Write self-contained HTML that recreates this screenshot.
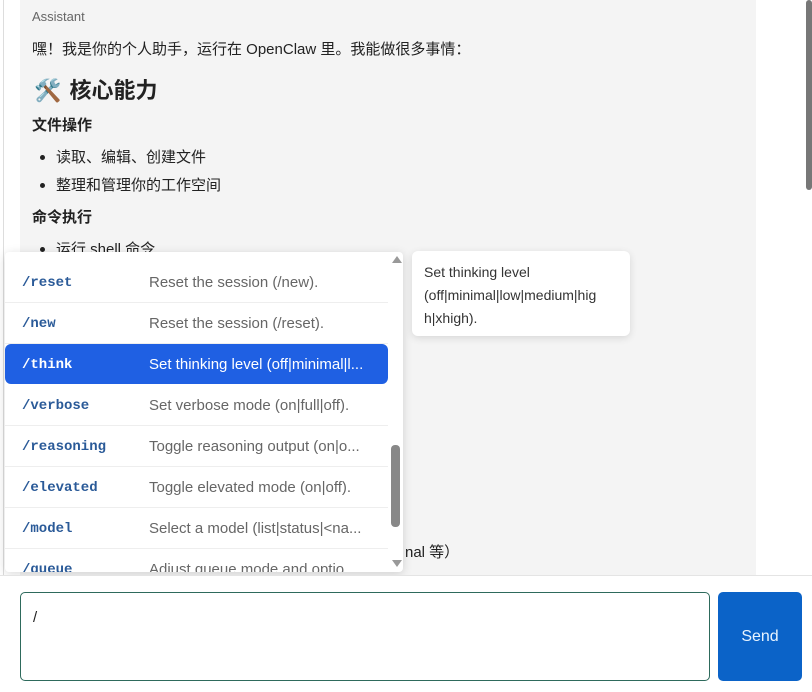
<!DOCTYPE html>
<html><head><meta charset="utf-8"><style>
*{box-sizing:border-box;margin:0;padding:0}
body{width:812px;height:692px;overflow:hidden;background:#fff;font-family:"Liberation Sans","Noto Sans CJK SC",sans-serif;position:relative;color:#222}
.leftline{position:absolute;left:3px;top:0;width:1px;height:575px;background:#ddd}
.msg{position:absolute;left:20px;top:0;width:736px;height:575px;background:#f4f4f4}
.t{position:absolute;left:32px;white-space:nowrap}
.li{position:absolute;left:56px;white-space:nowrap;font-size:15px}
.li:before{content:"";position:absolute;left:-16px;top:9px;width:5px;height:5px;border-radius:50%;background:#222}
.sb{position:absolute;left:806px;top:0;width:6px;height:190px;background:#777;border-radius:3px}
.bottom{position:absolute;left:0;top:575px;width:812px;height:117px;background:#fff;border-top:1px solid #e4e4e4}
.ta{position:absolute;left:20px;top:592px;width:690px;height:89px;border:1px solid #2e6a5c;border-radius:5px;background:#fff}
.send{position:absolute;left:718px;top:592px;width:84px;height:89px;background:#0b63c8;border-radius:5px;color:#e8f4ff;font-size:16px;text-align:center;line-height:89px}
.dd{position:absolute;left:5px;top:252px;width:398px;height:320px;background:#fff;box-shadow:0 2px 10px rgba(0,0,0,.15);overflow:hidden;border-radius:4px}
.row{position:absolute;left:0;width:383px;height:41px;border-bottom:1px solid #eee}
.row .c{position:absolute;left:17px;top:13px;font-family:"Liberation Mono",monospace;font-weight:bold;font-size:14px;color:#2a5a98}
.row .d{position:absolute;left:144px;top:12px;font-size:15px;color:#666;white-space:nowrap}
.row.sel{background:#1f60e3;border-radius:6px;border:none}
.row.sel .c,.row.sel .d{color:#fff}
.tip{position:absolute;left:412px;top:251px;width:218px;height:85px;background:#fff;border-radius:6px;box-shadow:0 2px 8px rgba(0,0,0,.12);padding:10px 12px;font-size:14px;line-height:23px;color:#333}
</style></head><body>
<div class="leftline"></div>
<div class="msg"></div>
<div class="t" style="top:9px;font-size:13px;color:#666">Assistant</div>
<div class="t" style="top:38px;font-size:15px">嘿！我是你的个人助手，运行在 OpenClaw 里。我能做很多事情：</div>
<div class="t" style="top:73px;font-size:22px;font-weight:bold;left:34px">🛠️ <span style="margin-left:2px">核心能力</span></div>
<div class="t" style="top:114px;font-size:15px;font-weight:bold">文件操作</div>
<div class="li" style="top:146px">读取、编辑、创建文件</div>
<div class="li" style="top:174px">整理和管理你的工作空间</div>
<div class="t" style="top:206px;font-size:15px;font-weight:bold">命令执行</div>
<div class="li" style="top:238px">运行 shell 命令</div>
<div class="t" style="top:541px;font-size:15px;left:405px">nal 等）</div>
<div class="sb"></div>
<div class="dd">
<div class="row" style="top:10px"><span class="c">/reset</span><span class="d">Reset the session (/new).</span></div>
<div class="row" style="top:51px"><span class="c">/new</span><span class="d">Reset the session (/reset).</span></div>
<div class="row sel" style="top:92px;height:40px"><span class="c">/think</span><span class="d">Set thinking level (off|minimal|l...</span></div>
<div class="row" style="top:133px"><span class="c">/verbose</span><span class="d">Set verbose mode (on|full|off).</span></div>
<div class="row" style="top:174px"><span class="c">/reasoning</span><span class="d">Toggle reasoning output (on|o...</span></div>
<div class="row" style="top:215px"><span class="c">/elevated</span><span class="d">Toggle elevated mode (on|off).</span></div>
<div class="row" style="top:256px"><span class="c">/model</span><span class="d">Select a model (list|status|&lt;na...</span></div>
<div class="row" style="top:297px"><span class="c">/queue</span><span class="d">Adjust queue mode and optio...</span></div>
<div style="position:absolute;left:387px;top:4px;width:0;height:0;border-left:5px solid transparent;border-right:5px solid transparent;border-bottom:7px solid #999"></div>
<div style="position:absolute;left:387px;top:308px;width:0;height:0;border-left:5px solid transparent;border-right:5px solid transparent;border-top:7px solid #999"></div>
<div style="position:absolute;left:386px;top:193px;width:9px;height:82px;background:#888;border-radius:4px"></div>
</div>
<div class="tip">Set thinking level (off|minimal|low|medium|hig h|xhigh).</div>
<div class="bottom"></div>
<div class="ta"><span style="position:absolute;left:12px;top:16px;font-size:15px">/</span></div>
<div class="send">Send</div>
</body></html>
